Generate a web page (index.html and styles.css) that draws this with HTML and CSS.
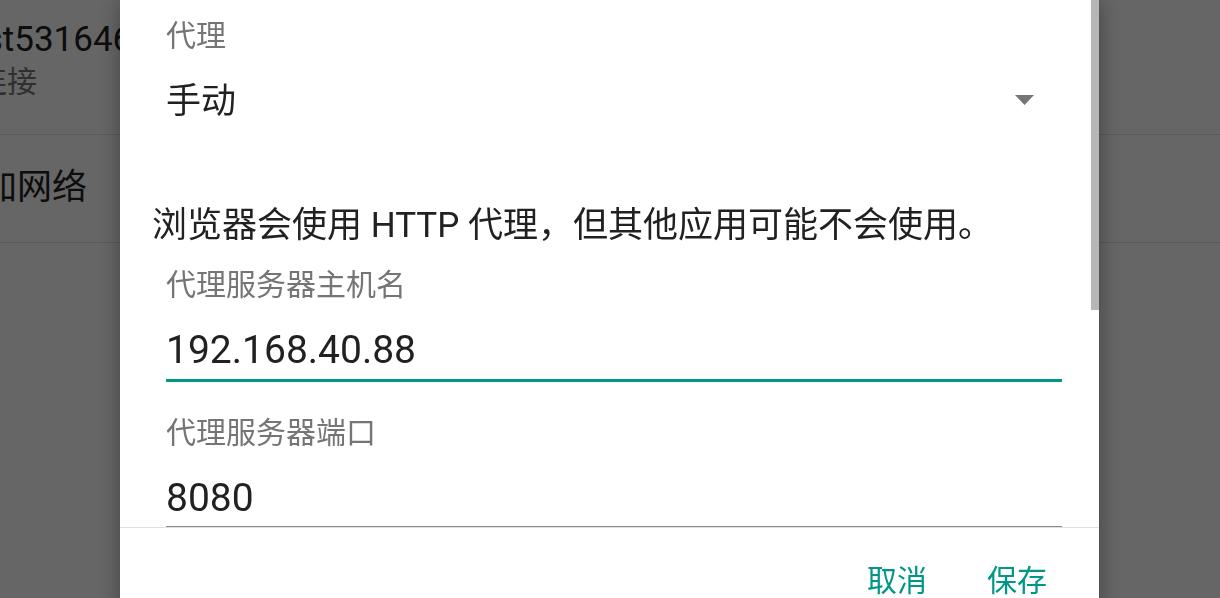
FILE: index.html
```html
<!DOCTYPE html>
<html lang="zh-CN">
<head>
    <meta charset="UTF-8">
    <meta name="viewport" content="width=device-width, initial-scale=1.0">
    <title>代理设置</title>
    <link rel="stylesheet" href="styles.css">
</head>
<body>
    <div class="list">
        <div class="row">
            <div class="row-title">Test5316460</div>
            <div class="row-sub">已连接</div>
        </div>
        <div class="row row-single">
            <div class="row-title">添加网络</div>
        </div>
    </div>

    <div class="scrim"></div>

    <div class="dialog">
        <div class="content">
            <div class="field">
                <div class="label">代理</div>
                <div class="spinner">
                    <span class="spinner-value">手动</span>
                    <svg class="arrow" width="19" height="10" viewBox="0 0 19 10">
                        <polygon points="0,0 19,0 9.5,10" fill="#757575"/>
                    </svg>
                </div>
            </div>
            <p class="note">浏览器会使用 HTTP 代理，但其他应用可能不会使用。</p>
            <div class="field">
                <div class="label">代理服务器主机名</div>
                <div class="input focused">192.168.40.88</div>
            </div>
            <div class="field">
                <div class="label label-gap">代理服务器端口</div>
                <div class="input">8080</div>
            </div>
            <div class="scrollbar"></div>
        </div>
        <div class="actions">
            <span class="btn">取消</span>
            <span class="btn">保存</span>
        </div>
    </div>
</body>
</html>
```

FILE: styles.css
```css
body {
    margin: 0;
    padding: 0;
    background-color: #fff;
    font-family: Roboto, "Noto Sans CJK SC", sans-serif;
    overflow: hidden;
    height: 598px;
}
/* list behind the dialog */
.list {
    margin-left: -53px;
}
.row {
    padding: 18px 0 32px;
    border-bottom: 1px solid #e0e0e0;
}
.row-single {
    padding: 31px 0 32px;
}
.row-title {
    font-size: 35px;
    line-height: 44px;
    color: #212121;
}
.row-sub {
    font-size: 30px;
    line-height: 40px;
    color: #757575;
}
.scrim {
    position: fixed;
    top: 0;
    left: 0;
    right: 0;
    bottom: 0;
    background: rgba(0, 0, 0, 0.6);
}
/* dialog */
.dialog {
    position: fixed;
    top: 0;
    left: 120px;
    width: 979px;
    height: 640px;
    background: #fff;
    box-shadow: 0 0 22px rgba(0, 0, 0, 0.35);
}
.content {
    position: relative;
    height: 527px;
    overflow: hidden;
    padding: 0 37px 0 32px;
    box-sizing: border-box;
}
.field {
    padding-left: 14px;
}
.label {
    font-size: 30px;
    line-height: 40px;
    color: #757575;
}
.field:first-child .label {
    margin-top: 16px;
}
.spinner {
    height: 88px;
    display: flex;
    align-items: center;
    justify-content: space-between;
    padding-right: 28px;
    font-size: 35px;
    color: #212121;
}
.spinner-value {
    margin-bottom: 6px;
}
.note {
    margin: 60px 0 17px;
    font-size: 35px;
    line-height: 44px;
    color: #212121;
}
.input {
    margin-top: 20px;
    font-size: 39px;
    line-height: 50px;
    color: #212121;
    padding-bottom: 3px;
    border-bottom: 1px solid #8a8a8a;
}
.input.focused {
    padding-bottom: 4px;
    border-bottom: 3px solid #009688;
}
.label-gap {
    margin-top: 31px;
}
.scrollbar {
    position: absolute;
    top: 0;
    right: 0;
    width: 8px;
    height: 310px;
    background: #b6b6b6;
}
.actions {
    border-top: 1px solid #e0e0e0;
    display: flex;
    justify-content: flex-end;
    gap: 60px;
    padding: 33px 52px 0 0;
}
.btn {
    font-size: 30px;
    line-height: 40px;
    color: #009688;
}
```
